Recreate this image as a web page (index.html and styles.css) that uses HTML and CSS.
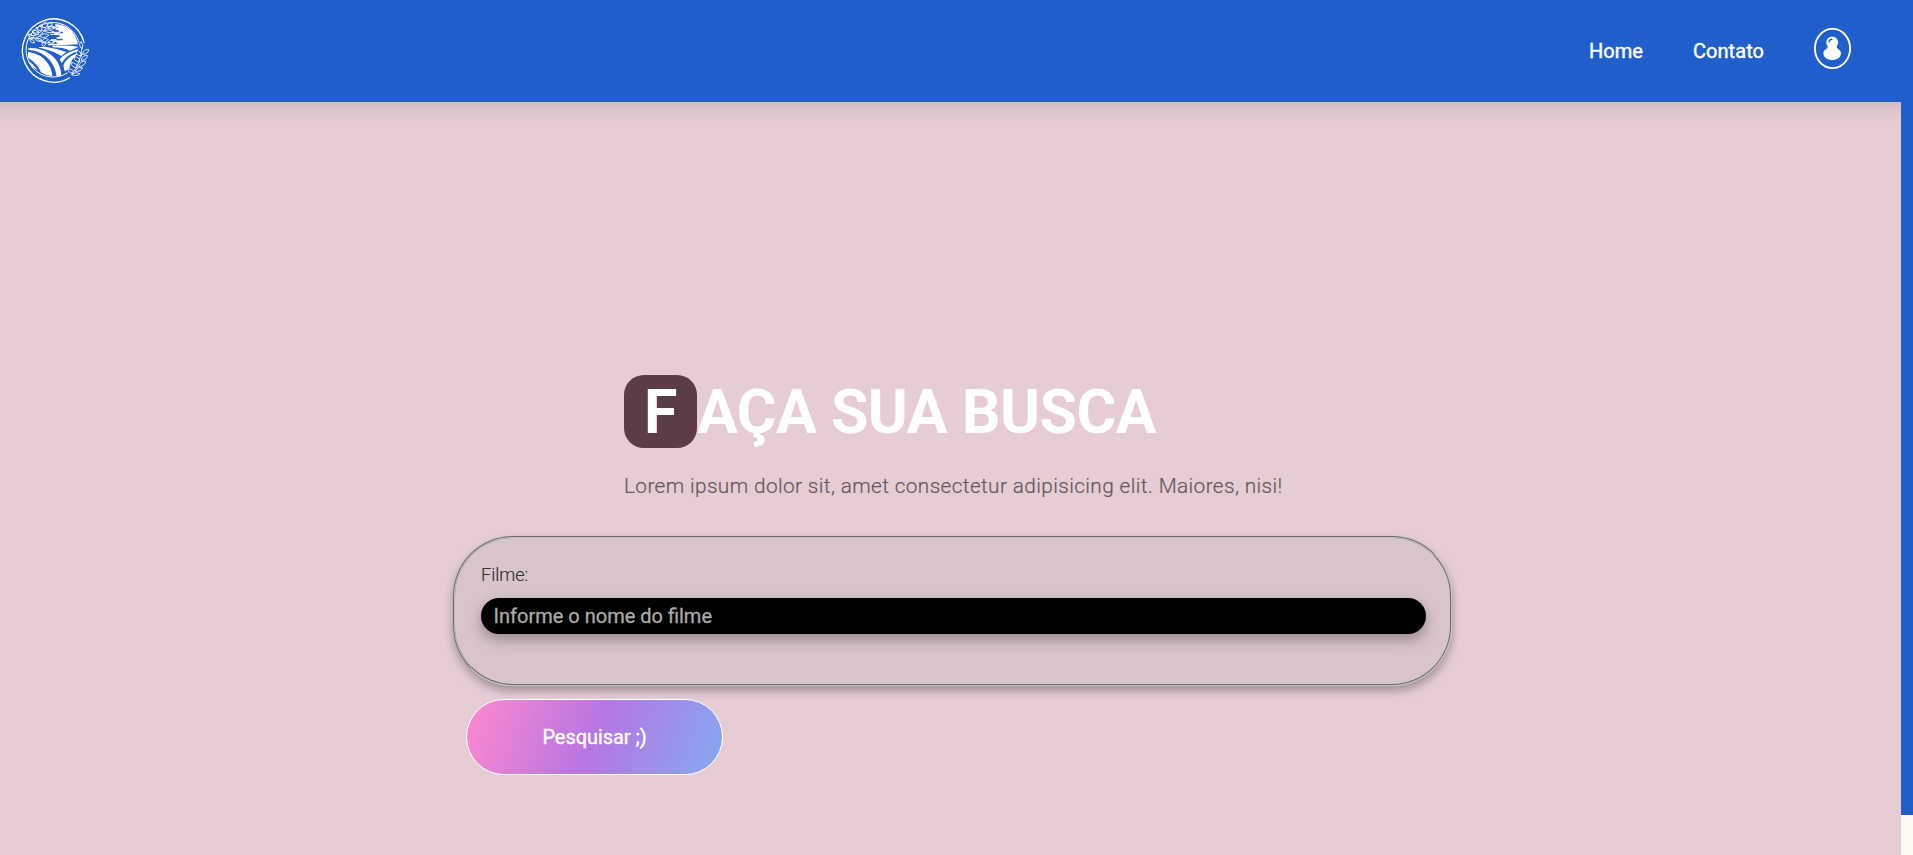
FILE: index.html
```html
<!DOCTYPE html>
<html lang="pt-BR">
<head>
<meta charset="utf-8">
<title>Faça sua busca</title>
<link rel="stylesheet" href="styles.css">
</head>
<body>
<header class="header">
  <a class="logo" href="#">
    <svg width="90" height="90" viewBox="0 0 270 270" fill="none" stroke="#fff" stroke-linecap="round">
      <path d="M222 112A94 95 0 1 0 178 219" stroke-width="4"/>
      <path d="M207 112A81 82 0 1 0 172 204" stroke-width="3"/>
      <path d="M136 57Q176 60 194 90Q201 104 204 118L150 121H114L115 116H142V111H128V106H158V101H140V96H150V90H132V85H158V80H146V75H137V69H144V65H136Z" fill="#fff" stroke="none"/>
      <path d="M141 67H126M150 82H127M143 88H122M138 104H124M166 93H148M170 112H140" stroke-width="3"/>
      <path d="M56 128Q108 128 138 164Q153 184 154 212L140 215Q137 188 119 165Q94 137 55 134Z" fill="#fff" stroke="none"/>
      <path d="M54 140Q93 146 112 173Q126 191 127 214Q108 212 93 202Q84 177 54 158Z" fill="#fff" stroke="none"/>
      <path d="M54 167Q74 180 82 195Q59 182 54 167Z" fill="#fff" stroke="none"/>
      <path d="M83 127Q126 136 154 153L169 141Q139 130 105 125Z" fill="#fff" stroke="none"/>
      <path d="M128 127Q160 127 178 137L206 126Q180 121 128 122Z" fill="#fff" stroke="none"/>
      <path d="M205 132Q166 142 149 163L155 174Q171 149 202 139Z" fill="#fff" stroke="none"/>
      <path d="M201 145Q170 157 160 181L164 199L178 190Q181 165 199 151Z" fill="#fff" stroke="none"/>
      <g stroke-width="2.6">
        <path d="M57 101Q86 104 100 80Q108 66 125 62M78 91Q62 94 56 88M88 83Q70 88 66 78M97 77Q78 78 79 67M106 69Q90 67 93 58M82 101Q98 119 119 113"/>
        <path d="M100 67Q91 58 106 51Q117 58 107 67ZM113 62Q112 51 125 54Q129 63 115 66ZM118 66Q132 60 136 69Q127 76 114 70ZM102 76Q118 71 132 81Q120 87 106 80ZM86 81Q78 68 89 62Q101 71 92 81ZM80 89Q61 85 70 75Q85 77 86 86ZM65 98Q51 94 55 87Q68 87 72 96ZM89 92Q105 81 117 91Q106 102 92 96ZM78 101Q93 98 96 106Q88 114 77 105ZM64 103Q74 105 73 114Q63 115 60 105ZM95 109Q105 94 115 104Q109 112 97 112ZM99 112Q91 121 101 124Q110 119 105 112ZM118 108Q130 103 132 112Q123 119 116 112Z"/>
        <path d="M216 127Q212 176 185 208M215 130Q203 120 213 110Q222 118 217 130ZM218 145Q221 132 236 134Q234 148 218 148ZM212 153Q195 149 199 136Q214 138 215 152ZM214 164Q218 150 232 151Q233 163 215 167ZM207 171Q189 168 194 155Q209 157 209 169ZM206 182Q211 167 227 169Q226 182 207 185ZM199 188Q181 185 184 173Q200 173 202 186ZM196 196Q205 184 218 188Q213 201 196 199ZM188 204Q172 203 174 192Q188 191 191 201ZM187 207Q200 199 210 206Q201 215 187 210Z"/>
      </g>
    </svg>
  </a>
  <nav class="nav">
    <a class="nav-link" href="#">Home</a>
    <a class="nav-link" href="#">Contato</a>
    <a class="user" href="#" aria-label="Usuário">
      <svg width="37" height="41" viewBox="0 0 37 41">
        <ellipse cx="18.500" cy="20.500" rx="17.600" ry="19.600" fill="none" stroke="#fff" stroke-width="1.900"/>
        <circle cx="18.200" cy="14.300" r="5.900" fill="#fff"/>
        <path d="M14 18H22.400Q22.600 20.200 24.500 21.200Q27 22.800 27 25.500Q26.500 31.800 18.200 32Q9.800 31.800 9.300 25.500Q9.300 22.800 11.800 21.200Q13.800 20.200 14 18Z" fill="#fff"/>
        <path d="M15 14.600Q15 11.300 18.300 11.300" fill="none" stroke="#205fcb" stroke-width="1.400"/>
      </svg>
    </a>
  </nav>
</header>
<main class="page">
  <section class="hero">
    <div class="intro">
      <h1 class="title">Faça sua busca</h1>
      <p class="subtitle">Lorem ipsum dolor sit, amet consectetur adipisicing elit. Maiores, nisi!</p>
    </div>
    <form class="search">
      <fieldset class="panel">
        <label class="label" for="filme">Filme:</label>
        <input class="field" id="filme" type="text" placeholder="Informe o nome do filme">
      </fieldset>
      <button class="submit" type="button">Pesquisar ;)</button>
    </form>
  </section>
</main>
</body>
</html>
```
FILE: styles.css
```css
* {
  box-sizing: border-box;
  margin: 0;
  padding: 0;
}

body {
  height: 855px;
  overflow: hidden;
  display: flex;
  flex-direction: column;
  background: #fdf9f0;
  font-family: Roboto, sans-serif;
}

.header {
  height: 102px;
  flex: none;
  display: flex;
  justify-content: space-between;
  padding: 5px 62px 0 10px;
  background: #205fcb;
}

.logo {
  height: 90px;
}

.nav {
  display: flex;
  align-items: flex-start;
}

.nav-link {
  margin: 34px 50px 0 0;
  color: #fff;
  font-size: 20px;
  font-weight: 400;
  line-height: 24px;
  letter-spacing: 0.05px;
  text-decoration: none;
  -webkit-text-stroke: 0.4px #fff;
}

.user {
  height: 41px;
  margin-top: 23px;
}

.page {
  height: 753px;
  padding-right: 12px;
  background: linear-gradient(#205fcb 713px, #fdf9f0 713px);
}

.hero {
  height: 753px;
  padding: 273px 0 0 453px;
  background: #e5cdd3;
  box-shadow: inset 0 24px 24px -24px rgba(0, 0, 0, 0.16);
}

.intro {
  padding-left: 171px;
}

.title {
  height: 73px;
  color: #fff;
  font-size: 60.8px;
  font-weight: 700;
  line-height: 75px;
  letter-spacing: -0.5px;
  text-transform: uppercase;
  white-space: nowrap;
}

.title::first-letter {
  padding: 2px 20px 0;
  border-radius: 20px;
  background: #5c3d46;
}

.subtitle {
  margin-top: 26px;
  color: #65575c;
  font-size: 20.8px;
  font-weight: 300;
  line-height: 24px;
  letter-spacing: 0.38px;
  -webkit-text-stroke: 0.2px #65575c;
}

.search {
  margin-top: 38px;
}

.panel {
  width: 999px;
  height: 150px;
  padding: 25px 24px 0 26px;
  border: 2px groove #c0c0c0;
  border-radius: 60px;
  background: #d9c4cb;
  box-shadow: 0 5px 10px rgba(0, 0, 0, 0.3);
}

.label {
  display: block;
  height: 35px;
  color: #333;
  font-size: 18px;
  font-weight: 300;
  line-height: 24px;
  -webkit-text-stroke: 0.2px #333;
}

.field {
  display: block;
  width: 945px;
  height: 36px;
  padding: 0 12.6px;
  border: 0;
  border-radius: 18px;
  background: #000;
  box-shadow: 0 6px 14px rgba(0, 0, 0, 0.3);
  color: #fff;
  font: 400 20px Roboto, sans-serif;
}

.field::placeholder {
  color: #aaa;
  -webkit-text-stroke: 0.3px #aaa;
}

.submit {
  display: block;
  width: 257px;
  height: 76px;
  margin: 13px 0 0 13px;
  border: 1px solid #fff;
  border-radius: 38px;
  background: linear-gradient(110deg, #ff88cf, #b676e1 50%, #84a9f0);
  color: #fff;
  font: 400 20px Roboto, sans-serif;
  letter-spacing: -0.05px;
  -webkit-text-stroke: 0.4px #fff;
}
```
